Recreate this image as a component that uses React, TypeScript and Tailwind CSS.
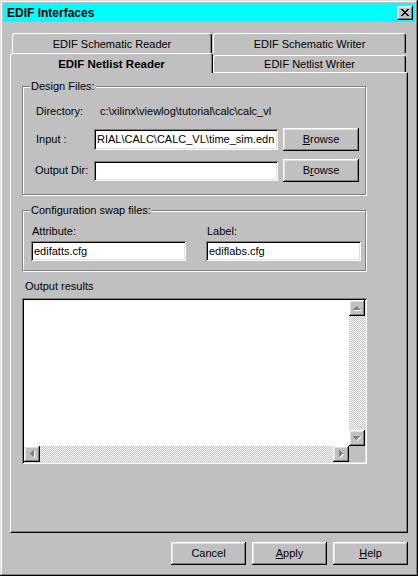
import React from 'react';

const raised = "bg-[#c0c0c0] shadow-[inset_-1px_-1px_#000,inset_1px_1px_#fff,inset_-2px_-2px_#808080,inset_2px_2px_#dfdfdf]";
const sunken = "bg-white shadow-[inset_1px_1px_#808080,inset_-1px_-1px_#fff,inset_2px_2px_#000,inset_-2px_-2px_#dfdfdf]";
const etched = "border border-[#808080] shadow-[inset_1px_1px_#fff,1px_1px_#fff]";
const dither = "bg-[image:conic-gradient(#c0c0c0_25%,#fff_0_50%,#c0c0c0_0_75%,#fff_0)] bg-[length:2px_2px]";

const arrows: Record<string, { w: number; h: number; d: string }> = {
  up: { w: 7, h: 4, d: "M3 0h1v1H3z M2 1h3v1H2z M1 2h5v1H1z M0 3h7v1H0z" },
  down: { w: 7, h: 4, d: "M0 0h7v1H0z M1 1h5v1H1z M2 2h3v1H2z M3 3h1v1H3z" },
  left: { w: 4, h: 7, d: "M3 0h1v7H3z M2 1h1v5H2z M1 2h1v3H1z M0 3h1v1H0z" },
  right: { w: 4, h: 7, d: "M0 0h1v7H0z M1 1h1v5H1z M2 2h1v3H2z M3 3h1v1H3z" },
};

const ScrollBtn: React.FC<{ dir: 'up' | 'down' | 'left' | 'right' }> = ({ dir }) => {
  const a = arrows[dir];
  return (
    <div className={`w-[16px] h-[16px] shrink-0 flex items-center justify-center ${raised}`}>
      <svg width={a.w + 1} height={a.h + 1} viewBox={`0 0 ${a.w + 1} ${a.h + 1}`} shapeRendering="crispEdges">
        <path d={a.d} fill="#fff" transform="translate(1 1)" />
        <path d={a.d} fill="#808080" />
      </svg>
    </div>
  );
};

const Group: React.FC<{ title: string; className?: string; children: React.ReactNode }> = ({ title, className = '', children }) => (
  <div className={`${etched} ${className}`}>
    <div className="-mt-[7px] ml-[7px] w-fit bg-[#c0c0c0] px-[1px] leading-[13px]">{title}</div>
    {children}
  </div>
);

const Button: React.FC<{ children: React.ReactNode; className?: string }> = ({ children, className = '' }) => (
  <div className={`h-[23px] flex items-center justify-center ${raised} ${className}`}>{children}</div>
);

export default function App() {
  return (
    <div className="w-[418px] h-[576px] bg-[#c0c0c0] p-[3px] text-[11px] text-black font-['Liberation_Sans',Arial,sans-serif] shadow-[inset_-1px_-1px_#000,inset_1px_1px_#dfdfdf,inset_-2px_-2px_#808080,inset_2px_2px_#fff]">
      {/* Title bar */}
      <div className="h-[19px] bg-[#00ffff] flex items-center justify-between pl-[4px] pr-[2px]">
        <span className="font-bold text-[12px] leading-[14px]">EDIF Interfaces</span>
        <div className={`w-[16px] h-[14px] flex items-center justify-center ${raised}`}>
          <svg width="8" height="7" viewBox="0 0 8 7" shapeRendering="crispEdges">
            <path
              d="M0 0h2v1H0z M6 0h2v1H6z M1 1h2v1H1z M5 1h2v1H5z M2 2h4v1H2z M3 3h2v1H3z M2 4h4v1H2z M1 5h2v1H1z M5 5h2v1H5z M0 6h2v1H0z M6 6h2v1H6z"
              fill="#000"
            />
          </svg>
        </div>
      </div>

      {/* Tabs */}
      <div className="mt-[11px] ml-[7px] w-[398px]">
        <div className="flex pl-[2px] gap-[1px]">
          <div className="w-[200px] h-[20px] border-t border-l border-white border-r border-r-black rounded-t-[3px] shadow-[inset_-1px_0_#808080] text-center pt-[4px] leading-[13px]">
            EDIF Schematic Reader
          </div>
          <div className="w-[193px] h-[20px] border-t border-l border-white border-r border-r-black rounded-t-[3px] shadow-[inset_-1px_0_#808080] text-center pt-[4px] leading-[13px]">
            EDIF Schematic Writer
          </div>
        </div>
        <div className="flex items-end h-[19px]">
          <div className="relative z-10 w-[203px] h-[20px] -mb-[1px] bg-[#c0c0c0] border-t border-l border-white border-r border-r-black rounded-t-[3px] shadow-[inset_-1px_0_#808080] text-center pt-[4px] leading-[13px] font-bold text-[11.5px]">
            EDIF Netlist Reader
          </div>
          <div className="w-[193px] h-[17px] border-t border-l border-white border-r border-r-black rounded-t-[3px] shadow-[inset_-1px_0_#808080] text-center pt-[2px] leading-[13px]">
            EDIF Netlist Writer
          </div>
        </div>

        {/* Panel */}
        <div className="h-[461px] border-t border-l border-white border-r border-b border-r-black border-b-black shadow-[inset_-1px_-1px_#808080] pl-[11px]">
          <Group title="Design Files:" className="mt-[13px] w-[344px] pb-[12px]">
            <div className="mt-[10px] h-[16px] flex items-center pl-[13px] leading-[13px]">
              <span className="w-[64px]">Directory:</span>
              <span>c:\xilinx\viewlog\tutorial\calc\calc_vl</span>
            </div>
            <div className="mt-[9px] h-[23px] flex items-center pl-[13px]">
              <span className="w-[58px]">Input :</span>
              <div className={`w-[184px] h-[21px] flex items-center pl-[3px] overflow-hidden whitespace-nowrap ${sunken}`}>
                RIAL\CALC\CALC_VL\time_sim.edn
              </div>
              <Button className="w-[76px] ml-[5px]"><span><span className="underline">B</span>rowse</span></Button>
            </div>
            <div className="mt-[8px] h-[23px] flex items-center pl-[12px]">
              <span className="w-[59px]">Output Dir:</span>
              <div className={`w-[184px] h-[20px] ${sunken}`}></div>
              <Button className="w-[76px] ml-[5px]"><span>B<span className="underline">r</span>owse</span></Button>
            </div>
          </Group>

          <Group title="Configuration swap files:" className="mt-[15px] w-[344px] pb-[9px]">
            <div className="mt-[8px] grid grid-cols-[155px_155px] gap-x-[20px] pl-[8px] leading-[13px]">
              <span className="pl-[1px]">Attribute:</span>
              <span className="pl-[1px]">Label:</span>
              <div className={`mt-[3px] h-[20px] flex items-center pl-[3px] ${sunken}`}>edifatts.cfg</div>
              <div className={`mt-[3px] h-[20px] flex items-center pl-[3px] ${sunken}`}>ediflabs.cfg</div>
            </div>
          </Group>

          <div className="mt-[9px] ml-[3px] leading-[13px]">Output results</div>

          <div className={`mt-[5px] w-[345px] h-[166px] p-[2px] flex flex-col ${sunken}`}>
            <div className="flex flex-1">
              <div className="flex-1 bg-white"></div>
              <div className="w-[16px] flex flex-col">
                <ScrollBtn dir="up" />
                <div className={`flex-1 ${dither}`}></div>
                <ScrollBtn dir="down" />
              </div>
            </div>
            <div className="flex h-[16px]">
              <ScrollBtn dir="left" />
              <div className={`flex-1 ${dither}`}></div>
              <ScrollBtn dir="right" />
              <div className="w-[16px] bg-[#c0c0c0]"></div>
            </div>
          </div>
        </div>
      </div>

      {/* Bottom buttons */}
      <div className="mt-[9px] ml-[7px] w-[398px] flex justify-end gap-[6px]">
        <Button className="w-[75px]">Cancel</Button>
        <Button className="w-[75px]"><span><span className="underline">A</span>pply</span></Button>
        <Button className="w-[75px]"><span><span className="underline">H</span>elp</span></Button>
      </div>
    </div>
  );
}
